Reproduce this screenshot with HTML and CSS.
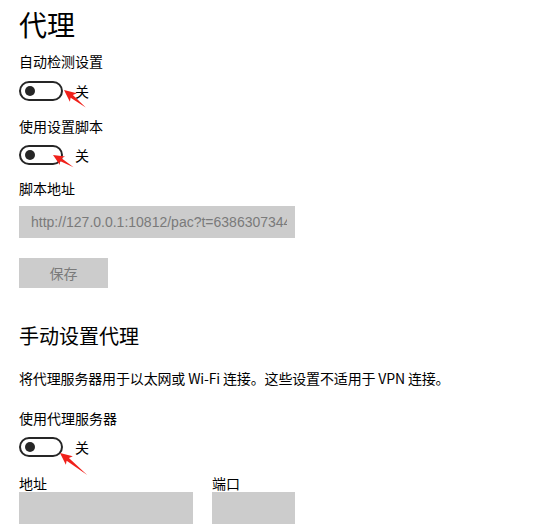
FILE: index.html
```html
<!DOCTYPE html>
<html>
<head>
    <title>代理</title>
    <link rel="stylesheet" href="styles.css">
</head>
<body>
    <div class="page">
        <h1 class="title">代理</h1>

        <div class="label first">自动检测设置</div>
        <div class="switchRow">
            <span class="switch"><span class="knob"></span></span>
            <span class="state">关</span>
            <!-- annotation arrow pointing at the switch -->
            <svg class="arrow" width="80" height="45">
                <path transform="translate(45 9) rotate(39)" d="M0 0 L12 -5.5 L10 -1.8 L28 0 L10 1.8 L12 5.5 Z" fill="#f0201a"/>
            </svg>
        </div>

        <div class="label">使用设置脚本</div>
        <div class="switchRow">
            <span class="switch"><span class="knob"></span></span>
            <span class="state">关</span>
            <svg class="arrow" width="80" height="45">
                <path transform="translate(34 10) rotate(31)" d="M0 0 L11 -5 L9 -1.6 L24 0 L9 1.6 L11 5 Z" fill="#f0201a"/>
            </svg>
        </div>

        <div class="label scriptLabel">脚本地址</div>
        <div class="field wide"><div class="clip">http://127.0.0.1:10812/pac?t=63863073441</div></div>
        <div class="button">保存</div>

        <h2 class="subtitle">手动设置代理</h2>
        <p class="desc">将代理服务器用于以太网或 Wi-Fi 连接。这些设置不适用于 VPN 连接。</p>

        <div class="label third">使用代理服务器</div>
        <div class="switchRow">
            <span class="switch"><span class="knob"></span></span>
            <span class="state">关</span>
            <svg class="arrow" width="80" height="45">
                <path transform="translate(41 16) rotate(39)" d="M0 0 L12 -5.5 L10 -1.8 L35 0 L10 1.8 L12 5.5 Z" fill="#f0201a"/>
            </svg>
        </div>

        <div class="hostRow">
            <div class="hostCol">
                <div class="small">地址</div>
                <div class="field host"></div>
            </div>
            <div class="hostCol">
                <div class="small">端口</div>
                <div class="field port"></div>
            </div>
        </div>
    </div>
</body>
</html>
```

FILE: styles.css
```css
body {
    margin: 0;
    background: #fff;
    color: #000;
    font-family: "Noto Sans CJK SC", "Noto Sans", sans-serif;
    overflow: hidden;
}

.page {
    padding: 4px 19px 0 19px;
}

.title {
    font-size: 28px;
    font-weight: 400;
    margin: 0;
    line-height: 40px;
}

.label {
    font-size: 14px;
    line-height: 20px;
    margin-top: 15px;
}

.label.first {
    margin-top: 7px;
}

.switchRow {
    position: relative;
    display: flex;
    align-items: center;
    height: 20px;
    margin-top: 9px;
}

.label.first + .switchRow {
    margin-top: 10px;
}

.switch {
    box-sizing: border-box;
    width: 44px;
    height: 20px;
    border: 2px solid #262626;
    border-radius: 10px;
    display: flex;
    align-items: center;
    padding-left: 4px;
}

.knob {
    width: 10px;
    height: 10px;
    border-radius: 50%;
    background: #262626;
}

.state {
    font-size: 14px;
    margin-left: 12px;
}

.arrow {
    position: absolute;
    left: 0;
    top: 0;
    overflow: visible;
    pointer-events: none;
}

.scriptLabel {
    margin-top: 13px;
}

.field {
    background: #ccc;
    height: 32px;
    box-sizing: border-box;
}

.wide {
    width: 276px;
    margin-top: 8px;
    padding: 0 8px 0 12px;
}

.clip {
    color: #7a7a7a;
    font-family: "Liberation Sans", sans-serif;
    font-size: 14px;
    line-height: 32px;
    white-space: nowrap;
    overflow: hidden;
}

.button {
    width: 89px;
    height: 30px;
    margin-top: 20px;
    background: #ccc;
    color: #7a7a7a;
    font-size: 14px;
    line-height: 30px;
    text-align: center;
}

.subtitle {
    font-size: 20px;
    font-weight: 400;
    margin: 34px 0 0 0;
    line-height: 28px;
}

.desc {
    font-size: 14px;
    letter-spacing: -0.15px;
    margin: 18px 0 0 0;
    line-height: 20px;
}

.label.third {
    margin-top: 20px;
}

.hostRow {
    display: flex;
    gap: 19px;
    margin-top: 18px;
}

.small {
    font-size: 14px;
    line-height: 17px;
}

.host {
    width: 174px;
}

.port {
    width: 83px;
}
```
